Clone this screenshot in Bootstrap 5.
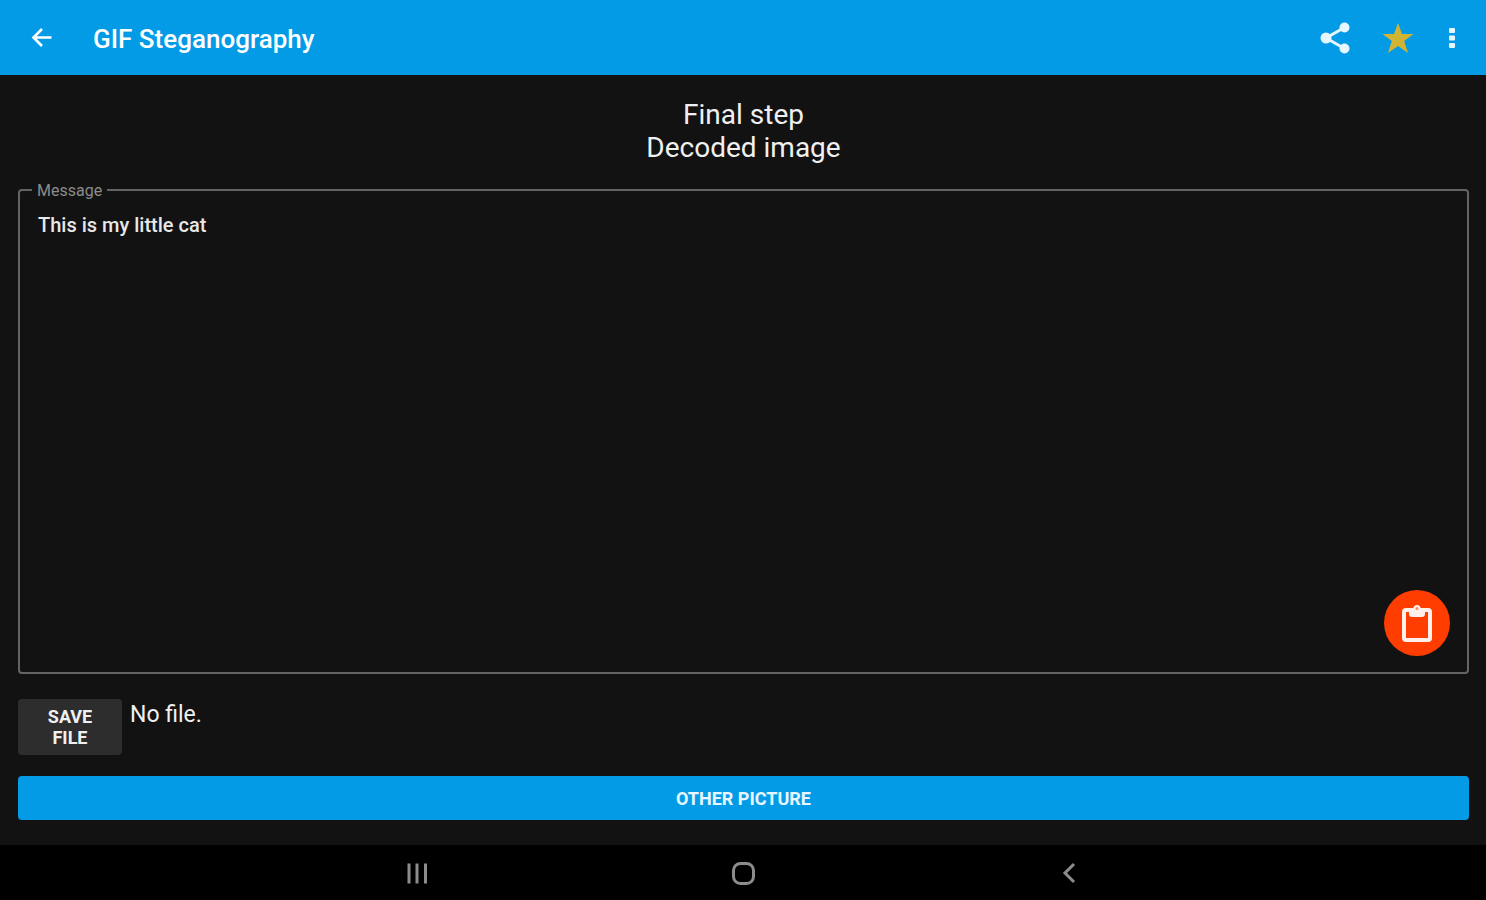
<!DOCTYPE html>
<html lang="en" data-bs-theme="dark">
<head>
<meta charset="utf-8">
<meta name="viewport" content="width=device-width, initial-scale=1">
<title>GIF Steganography</title>
<link href="https://cdn.jsdelivr.net/npm/bootstrap@5.3.0/dist/css/bootstrap.min.css" rel="stylesheet">
<style>
  body { font-family: Roboto, "Liberation Sans", sans-serif; background: #121212; color: #f0f0f0; }
  .icon-btn { border: 0; background: none; color: #fff; padding: 0; line-height: 1; display: inline-flex; }
  .app-bar { background: #039be6; padding: 0 24px; min-height: 75px; color: #fff; }
  .app-title { font-size: 26px; font-weight: 500; line-height: 32px; margin: 2px 0 0 33px; }
  .bar-actions { gap: 26px; }
  .star { color: #d0b432; }
  .screen { padding: 23px 17px 25px 18px; }
  .step-title { font-size: 28px; font-weight: 400; line-height: 33px; margin-bottom: 25px; color: #f0f0f0; }
  .message-box { min-height: 160px; }
  .message-box textarea { resize: none; background: transparent; border: 2px solid #646464; border-radius: 4px; padding: 20px 18px; font-size: 20px; font-weight: 500; line-height: 28px; color: #e8e8e8; }
  .message-box textarea:focus { background: transparent; border-color: #039be6; }
  .message-box label { left: 14px; top: -8px; padding: 0 5px; background: #121212; color: #8c8c8c; font-size: 16px; line-height: 20px; }
  .copy-btn { right: 19px; bottom: 18px; width: 66px; height: 66px; background: #ff3d00; align-items: center; justify-content: center; }
  .file-row { margin: 25px 0 21px; gap: 8px; }
  .btn-label { font-size: 18px; font-weight: 700; line-height: 21px; border: 0; border-radius: 4px; }
  .save-btn { width: 104px; padding: 7px 20px; background: #2d2d2d; color: #f0f0f0; }
  .file-name { font-size: 23px; line-height: 32px; }
  .other-btn { background: #039be6; color: #e8f6ff; min-height: 44px; }
  .system-bar { background: #000; min-height: 55px; padding: 0 254px; }
  .system-bar .icon-btn { color: #8c8c8c; }
</style>
</head>
<body>
<div class="d-flex flex-column vh-100">
  <header class="app-bar d-flex align-items-center">
    <button class="icon-btn" type="button" aria-label="Back">
      <svg width="36" height="36" viewBox="0 0 36 36" fill="none" stroke="currentColor" stroke-width="2.6"><path d="M27.500 17.500H10M18 9l-8.500 8.500L18 26"/></svg>
    </button>
    <h1 class="app-title flex-grow-1">GIF Steganography</h1>
    <div class="bar-actions d-flex align-items-center">
      <button class="icon-btn" type="button" aria-label="Share">
        <svg width="36" height="36" viewBox="0 0 36 36" fill="#e8f6ff"><path d="M26.500 7.500L8 18l18.500 10.500" fill="none" stroke="#e8f6ff" stroke-width="3"/><circle cx="26.500" cy="7.500" r="5"/><circle cx="8" cy="18" r="5.500"/><circle cx="26.500" cy="28.500" r="5"/></svg>
      </button>
      <button class="icon-btn star" type="button" aria-label="Favourite">
        <svg width="36" height="36" viewBox="0 0 36 36" fill="currentColor"><path d="M18 3l4 11h11.500l-9.300 7 3.800 12L18 26l-10 7 3.800-12-9.300-7H14z"/></svg>
      </button>
      <button class="icon-btn" type="button" aria-label="More options">
        <svg width="20" height="36" viewBox="0 0 20 36" fill="#e8f6ff"><rect x="7" y="8" width="6" height="5" rx="1"/><rect x="7" y="15.500" width="6" height="5" rx="1"/><rect x="7" y="23" width="6" height="5" rx="1"/></svg>
      </button>
    </div>
  </header>

  <main class="screen flex-grow-1 d-flex flex-column">
    <h2 class="step-title text-center">Final step<br>Decoded image</h2>
    <div class="message-box position-relative flex-grow-1 d-flex">
      <textarea class="form-control shadow-none" id="message" spellcheck="false">This is my little cat</textarea>
      <label class="position-absolute" for="message">Message</label>
      <button class="icon-btn copy-btn position-absolute rounded-circle" type="button" aria-label="Copy message">
        <svg width="36" height="42" viewBox="0 0 36 42" fill="none" stroke="#fff0eb"><rect x="5" y="8" width="26" height="30" rx="2" stroke-width="4"/><path d="M10 8h4a4 4 0 0 1 8 0h4v4q0 3-3 3H13q-3 0-3-3z" fill="#fff0eb" stroke="none"/><circle cx="18" cy="6.500" r="2.500" fill="#ff8a65" stroke-width="2"/></svg>
      </button>
    </div>
    <div class="file-row d-flex align-items-start">
      <button class="btn btn-label save-btn" type="button">SAVE FILE</button>
      <span class="file-name">No file.</span>
    </div>
    <button class="btn btn-label other-btn w-100" type="button">OTHER PICTURE</button>
  </main>

  <nav class="system-bar d-flex align-items-center justify-content-around" aria-label="System">
    <button class="icon-btn" type="button" aria-label="Recent apps">
      <svg width="28" height="28" viewBox="0 0 28 28" stroke="currentColor" stroke-width="3"><path d="M6 4.500v20M14 4.500v20M22.500 4.500v20"/></svg>
    </button>
    <button class="icon-btn" type="button" aria-label="Home">
      <svg width="28" height="28" viewBox="0 0 28 28" fill="none" stroke="currentColor" stroke-width="3"><rect x="4.500" y="4.500" width="20" height="20" rx="7"/></svg>
    </button>
    <button class="icon-btn" type="button" aria-label="Previous screen">
      <svg width="28" height="28" viewBox="0 0 28 28" fill="none" stroke="currentColor" stroke-width="3"><path d="M19 5l-9 9 9 9"/></svg>
    </button>
  </nav>
</div>
<script src="https://cdn.jsdelivr.net/npm/bootstrap@5.3.0/dist/js/bootstrap.bundle.min.js"></script>
</body>
</html>
